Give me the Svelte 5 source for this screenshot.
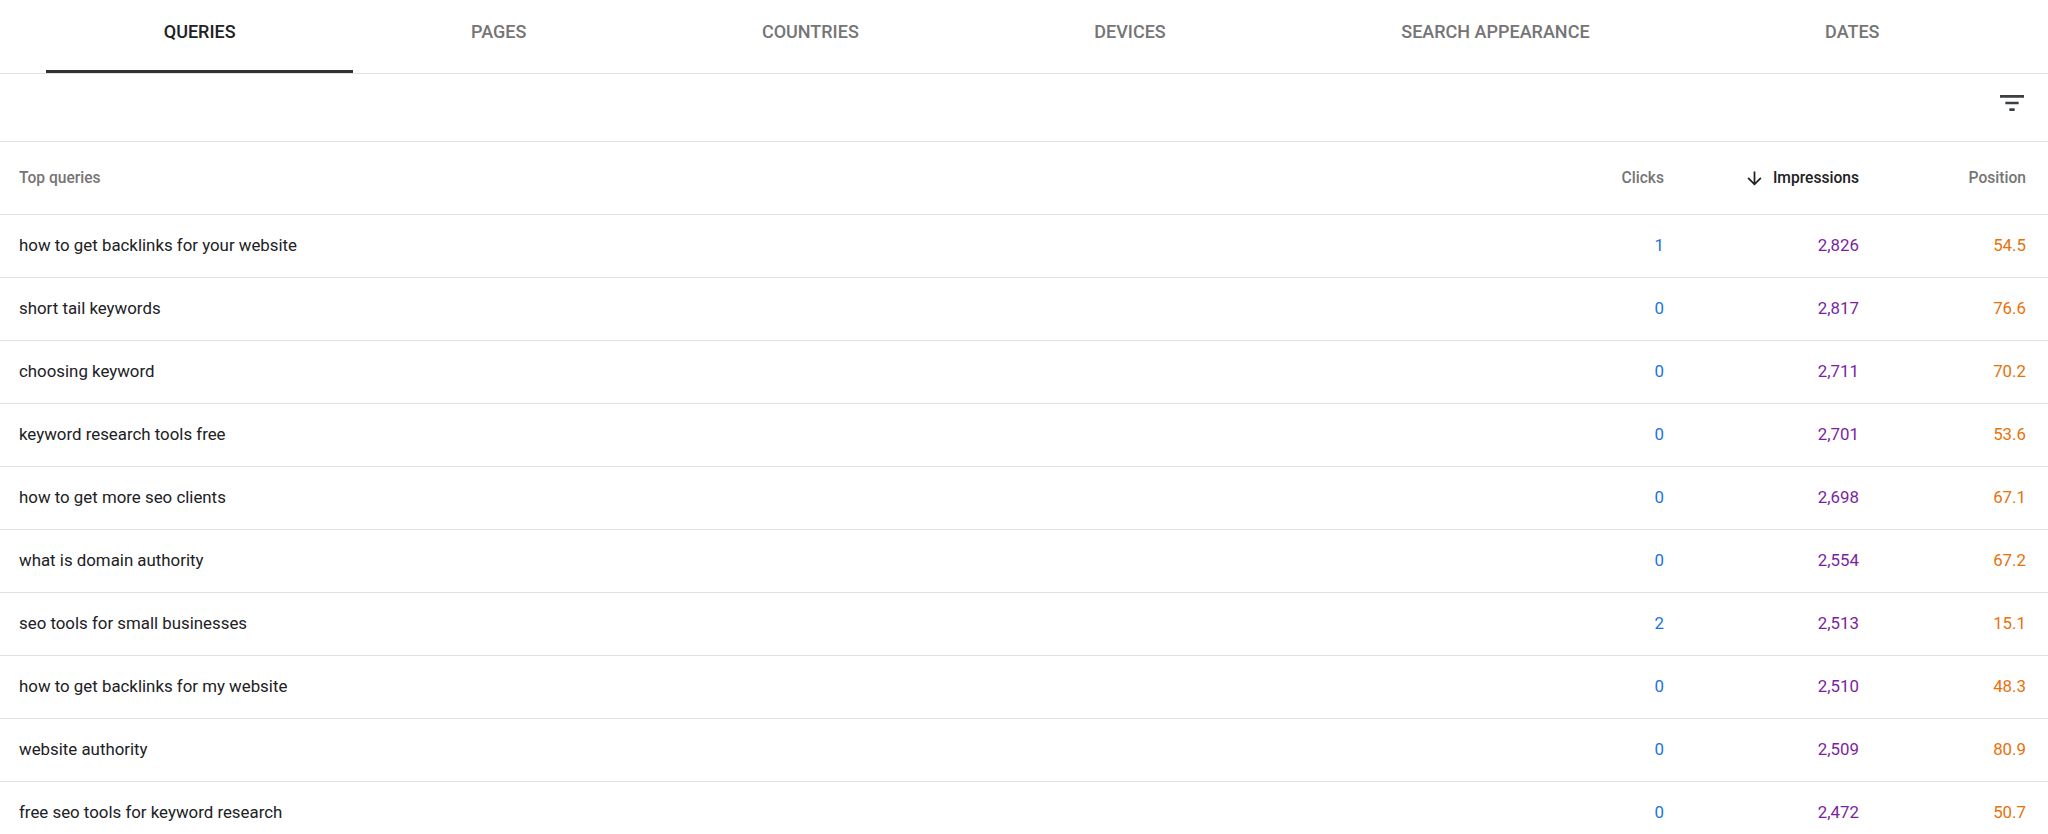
<script lang="ts">
  const tabs = ['Queries', 'Pages', 'Countries', 'Devices', 'Search appearance', 'Dates'];

  const rows = [
    { query: 'how to get backlinks for your website', clicks: '1', impressions: '2,826', position: '54.5' },
    { query: 'short tail keywords', clicks: '0', impressions: '2,817', position: '76.6' },
    { query: 'choosing keyword', clicks: '0', impressions: '2,711', position: '70.2' },
    { query: 'keyword research tools free', clicks: '0', impressions: '2,701', position: '53.6' },
    { query: 'how to get more seo clients', clicks: '0', impressions: '2,698', position: '67.1' },
    { query: 'what is domain authority', clicks: '0', impressions: '2,554', position: '67.2' },
    { query: 'seo tools for small businesses', clicks: '2', impressions: '2,513', position: '15.1' },
    { query: 'how to get backlinks for my website', clicks: '0', impressions: '2,510', position: '48.3' },
    { query: 'website authority', clicks: '0', impressions: '2,509', position: '80.9' },
    { query: 'free seo tools for keyword research', clicks: '0', impressions: '2,472', position: '50.7' }
  ];
</script>

<div class="page">
  <nav class="tabs">
    {#each tabs as tab, i}
      <div class="tab" class:active={i === 0}>{tab}</div>
    {/each}
  </nav>

  <div class="toolbar">
    <svg class="filter" viewBox="0 0 24 24" width="32" height="32" aria-hidden="true">
      <path d="M3 6h18v2H3zM7 11h10v2H7zM10 16h4v2h-4z" />
    </svg>
  </div>

  <div class="row head">
    <div class="query">Top queries</div>
    <div class="num clicks">Clicks</div>
    <div class="num impressions sorted">
      <svg viewBox="0 0 24 24" width="21" height="21" aria-hidden="true">
        <path d="M20 12l-1.41-1.41L13 16.17V4h-2v12.17l-5.58-5.59L4 12l8 8 8-8z" />
      </svg>
      Impressions
    </div>
    <div class="num position">Position</div>
  </div>

  {#each rows as row}
    <div class="row">
      <div class="query">{row.query}</div>
      <div class="num clicks">{row.clicks}</div>
      <div class="num impressions">{row.impressions}</div>
      <div class="num position">{row.position}</div>
    </div>
  {/each}
</div>

<style>
  :global(body) {
    margin: 0;
    background: #fff;
    overflow: hidden;
  }

  .page {
    height: 834px;
    overflow: hidden;
    font-family: Roboto, "Liberation Sans", sans-serif;
    color: #202124;
  }

  .tabs {
    display: flex;
    height: 74px;
    padding-left: 46px;
    box-sizing: border-box;
    border-bottom: 1px solid #e0e0e0;
  }

  .tab {
    padding: 0 117.75px;
    height: 73px;
    line-height: 64px;
    box-sizing: border-box;
    font-size: 18px;
    font-weight: 500;
    text-transform: uppercase;
    color: #757575;
    white-space: nowrap;
  }

  .tab.active {
    color: #202124;
    border-bottom: 3px solid #303134;
  }

  .toolbar {
    display: flex;
    justify-content: flex-end;
    align-items: center;
    height: 68px;
    padding-right: 20px;
    padding-bottom: 10px;
    box-sizing: border-box;
    border-bottom: 1px solid #e0e0e0;
  }

  .filter {
    fill: #3c4043;
  }

  .row {
    display: grid;
    grid-template-columns: 1fr 150px 195px 167px;
    align-items: center;
    height: 63px;
    padding: 0 22px 2px 19px;
    box-sizing: border-box;
    border-bottom: 1px solid #e0e0e0;
    font-size: 16.85px;
  }

  .row.head {
    height: 73px;
    padding-bottom: 0;
    font-size: 15.6px;
    font-weight: 500;
    color: #757575;
  }

  .num {
    text-align: right;
  }

  .clicks {
    color: #1a73e8;
  }

  .impressions {
    color: #7b1fa2;
  }

  .position {
    color: #e8710a;
  }

  .head .clicks,
  .head .position {
    color: #757575;
  }

  .head .sorted {
    display: flex;
    justify-content: flex-end;
    align-items: center;
    gap: 8px;
    color: #202124;
  }

  .sorted svg {
    fill: #202124;
  }
</style>
